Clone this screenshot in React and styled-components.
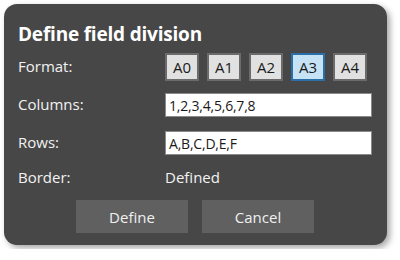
import React from 'react';
import styled, { createGlobalStyle } from 'styled-components';

const GlobalStyle = createGlobalStyle`
  body {
    margin: 0;
    background: #ffffff;
    font-family: 'Open Sans', 'Noto Sans', sans-serif;
  }
`;

const formats = ['A0', 'A1', 'A2', 'A3', 'A4'];

const App = () => {
  return (
    <>
      <GlobalStyle />
      <Dialog>
        <Title>Define field division</Title>
        <Form>
          <Row height={38}>
            <Label>Format:</Label>
            <Formats>
              {formats.map((f) => (
                <FormatButton key={f} selected={f === 'A3'}>
                  {f}
                </FormatButton>
              ))}
            </Formats>
          </Row>
          <Row height={38}>
            <Label>Columns:</Label>
            <Field>1,2,3,4,5,6,7,8</Field>
          </Row>
          <Row height={38}>
            <Label>Rows:</Label>
            <Field>A,B,C,D,E,F</Field>
          </Row>
          <Row height={32}>
            <Label>Border:</Label>
            <Value>Defined</Value>
          </Row>
        </Form>
        <Footer>
          <Button>Define</Button>
          <Button>Cancel</Button>
        </Footer>
      </Dialog>
    </>
  );
};

const Dialog = styled.div`
  box-sizing: border-box;
  margin: 4px;
  width: 383px;
  height: 241px;
  padding: 19px 15px 0 14px;
  background: #474747;
  border-radius: 13px;
  box-shadow: 3px 3px 6px rgba(0, 0, 0, 0.35);
  color: #f2f2f2;
`;

const Title = styled.div`
  font-size: 19px;
  font-weight: 700;
  line-height: 22px;
  letter-spacing: -0.2px;
  color: #ffffff;
`;

const Form = styled.div`
  margin-top: 3px;
  display: flex;
  flex-direction: column;
`;

const Row = styled.div`
  display: grid;
  grid-template-columns: 147px 1fr;
  align-items: center;
  height: ${(p) => p.height}px;
`;

const Label = styled.div`
  font-size: 15px;
  line-height: 18px;
  margin-top: -2px;
`;

const Formats = styled.div`
  display: flex;
  gap: 8px;
`;

const FormatButton = styled.div`
  box-sizing: border-box;
  width: 34px;
  height: 28px;
  display: flex;
  align-items: center;
  justify-content: center;
  font-size: 15px;
  color: #1a1a1a;
  background: ${(p) => (p.selected ? '#c6e2f5' : '#e1e1e1')};
  border: 2px solid ${(p) => (p.selected ? '#2a6fa8' : '#6b6b6b')};
`;

const Field = styled.div`
  box-sizing: border-box;
  height: 24px;
  padding: 0 3px;
  display: flex;
  align-items: center;
  font-size: 14px;
  letter-spacing: -0.2px;
  color: #1a1a1a;
  background: #ffffff;
  border: 1px solid #8a8a8a;
`;

const Value = styled.div`
  font-size: 15px;
  line-height: 18px;
  margin-top: -2px;
`;

const Footer = styled.div`
  margin-top: 6px;
  display: flex;
  justify-content: center;
  gap: 14px;
`;

const Button = styled.div`
  width: 112px;
  height: 33px;
  display: flex;
  align-items: center;
  justify-content: center;
  font-size: 15px;
  background: #606060;
  color: #f0f0f0;
`;

export default App;
